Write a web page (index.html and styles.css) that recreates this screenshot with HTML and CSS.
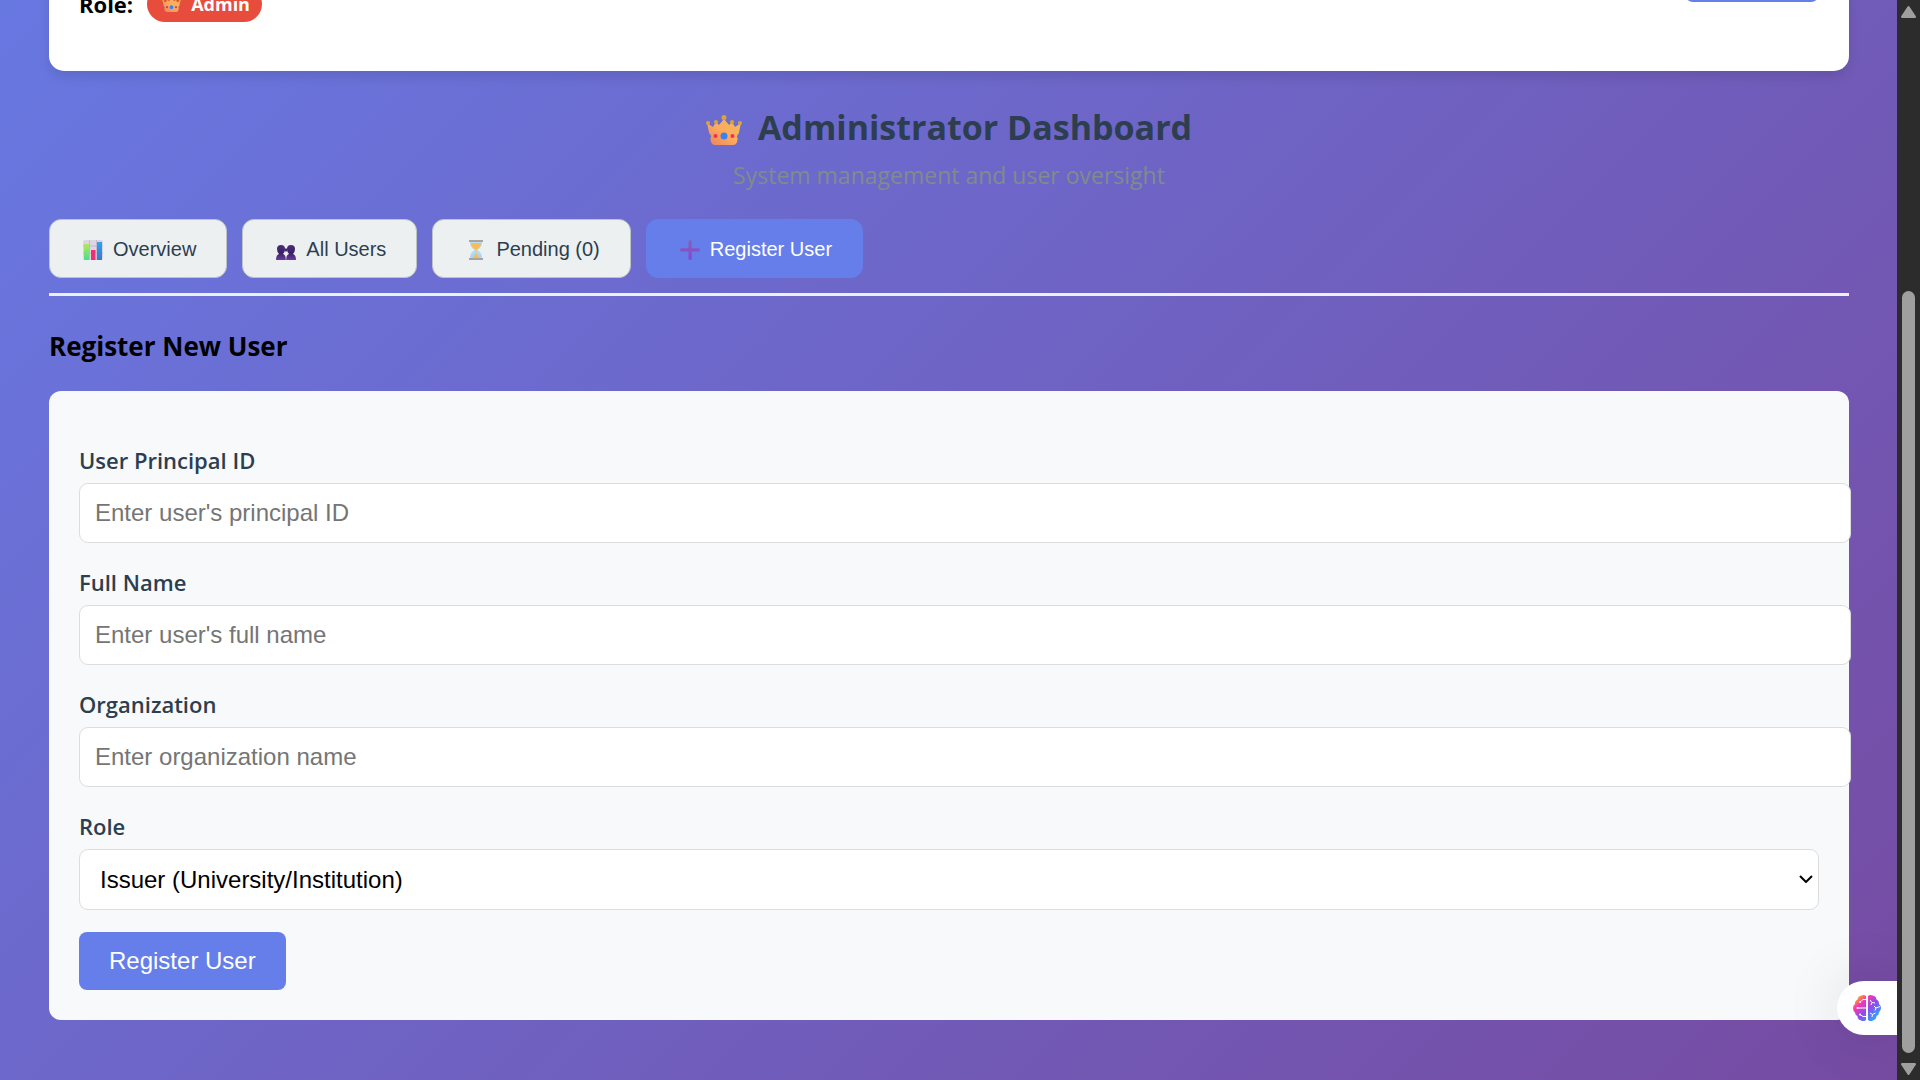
FILE: index.html
```html
<!DOCTYPE html>
<html lang="en">
<head>
<meta charset="utf-8">
<title>Administrator Dashboard</title>
<link rel="stylesheet" href="styles.css">
</head>
<body>
<svg class="defs" aria-hidden="true">
  <defs>
    <linearGradient id="gold" x1="0" y1="1" x2="1" y2="0"><stop offset="0" stop-color="#e9805c"/><stop offset=".5" stop-color="#fdab5c"/><stop offset="1" stop-color="#f3b95c"/></linearGradient>
    <linearGradient id="green" x1="0" y1="0" x2="0" y2="1"><stop offset="0" stop-color="#b4e85c"/><stop offset="1" stop-color="#4ddc8c"/></linearGradient>
    <linearGradient id="blue" x1="0" y1="0" x2="0" y2="1"><stop offset="0" stop-color="#2fa3ef"/><stop offset="1" stop-color="#3b78cf"/></linearGradient>
    <linearGradient id="people" x1="0" y1="0" x2="0" y2="1"><stop offset="0" stop-color="#4b2c78"/><stop offset=".55" stop-color="#3c2166"/><stop offset="1" stop-color="#6a3aa0"/></linearGradient>
    <linearGradient id="plus" x1="0" y1="0" x2="0" y2="1"><stop offset="0" stop-color="#8561b4"/><stop offset="1" stop-color="#8645d6"/></linearGradient>
    <linearGradient id="brain" x1="0" y1="0" x2="1" y2="1"><stop offset=".12" stop-color="#ffa51f"/><stop offset=".3" stop-color="#f536b5"/><stop offset=".55" stop-color="#8a4df0"/><stop offset=".9" stop-color="#1fb4ff"/></linearGradient>
    <symbol id="crown" viewBox="0 0 36 30">
      <path d="M1 8 7 12 10 7 13 10 18 4 23 10 26 7 29 12 35 8 31 27Q30 30 27 30H9Q6 30 5 27Z" fill="url(#gold)"/>
      <g fill="#d9a437"><circle cx="2" cy="8" r="2"/><circle cx="10" cy="7" r="2"/><circle cx="18" cy="2.500" r="2.500"/><circle cx="26" cy="7" r="2"/><circle cx="34" cy="8" r="2"/></g>
      <circle cx="18" cy="21" r="3.500" fill="#3b82f0"/><circle cx="9.500" cy="21" r="2" fill="#f0304e"/><circle cx="26.500" cy="21" r="2" fill="#f0304e"/>
      <path d="M3 19Q5 21 4 23M33 19Q31 21 32 23" stroke="#4b78d8" stroke-width="1.500" fill="none"/>
    </symbol>
  </defs>
</svg>
<div class="window">
  <main class="page">
    <section class="profile">
      <div class="role"><strong>Role:</strong>
        <span class="badge"><svg class="crown-small" aria-hidden="true"><use href="#crown"/></svg>Admin</span>
      </div>
      <button class="profile-action" type="button" aria-label="Account"></button>
    </section>

    <header class="title">
      <h1><svg class="crown-large" aria-hidden="true"><use href="#crown"/></svg>Administrator Dashboard</h1>
      <p>System management and user oversight</p>
    </header>

    <nav class="tabs">
      <button type="button" class="tab">
        <svg class="icon" viewBox="0 0 20 20" aria-hidden="true"><rect width="20" height="20" rx="2" fill="#dcd5e4"/><path d="M0 6H20M0 13H20M6.500 0V20M13.500 0V20" stroke="#b9afc6" stroke-width=".7"/><rect x="1" y="4" width="5" height="16" fill="url(#green)"/><rect x="8" y="10" width="4.500" height="10" fill="#ee2f78"/><rect x="14" y="2" width="5" height="18" fill="url(#blue)"/></svg>
        Overview</button>
      <button type="button" class="tab">
        <svg class="icon" viewBox="0 0 20 20" aria-hidden="true"><g fill="url(#people)"><path d="M1 9Q1 5 5 5T9 9Q9 12 7 14Q10 15 9.800 20H0Q0 15 3 14Q1 12 1 9Z"/><path d="M11 9Q11 5 15 5T19 9Q19 12 17 14Q20 15 20 20H10.200Q10 15 13 14Q11 12 11 9Z"/><path d="M8.500 8.500H11.500V11.500H8.500Z"/></g></svg>
        All Users</button>
      <button type="button" class="tab">
        <svg class="icon" viewBox="0 0 20 20" aria-hidden="true"><path d="M4 1H16V3Q16 7 11.500 10 16 13 16 17V19H4V17Q4 13 8.500 10 4 7 4 3Z" fill="#b9dcf1"/><path d="M5 3H15Q15 7 10.500 9.500V14L15 18H5L9.500 14V9.500Q5 7 5 3Z" fill="#f9bd55"/><path d="M5 15 9 12.500V15L6 18H4.500ZM15 15 11 12.500V15L14 18H15.500Z" fill="#a6d8f5"/><path d="M3 0H17V2H3ZM3 18H17V20H3Z" fill="#a9a3a6"/></svg>
        Pending (0)</button>
      <button type="button" class="tab active">
        <svg class="icon" viewBox="0 0 20 20" aria-hidden="true"><path d="M8.500 1.500Q8.500 0 10 0T11.700 1.500V8.300H18.500Q20 8.300 20 9.900T18.500 11.500H11.700V18.500Q11.700 20 10 20T8.500 18.500V11.500H1.500Q0 11.500 0 9.900T1.500 8.300H8.500Z" fill="url(#plus)"/></svg>
        Register User</button>
    </nav>

    <h2>Register New User</h2>
    <form class="card">
      <div class="field"><label for="principal">User Principal ID</label><input id="principal" type="text" placeholder="Enter user's principal ID"></div>
      <div class="field"><label for="name">Full Name</label><input id="name" type="text" placeholder="Enter user's full name"></div>
      <div class="field"><label for="org">Organization</label><input id="org" type="text" placeholder="Enter organization name"></div>
      <div class="field"><label for="role">Role</label>
        <div class="select-wrap">
          <select id="role"><option>Issuer (University/Institution)</option></select>
          <svg class="chevron" viewBox="0 0 14 8" aria-hidden="true"><path d="M1 1 7 7 13 1" fill="none" stroke="#000" stroke-width="2"/></svg>
        </div>
      </div>
      <button type="button" class="submit">Register User</button>
    </form>
    <button class="assistant" type="button" aria-label="Assistant">
      <svg viewBox="0 0 28 26" aria-hidden="true">
        <path d="M13 1V25Q11 27 8 25.500Q4.500 24.500 4.500 21Q2 20 2 17.500Q0 16 0 13T2 9Q1.500 6 4.500 4.500Q5 1 8.500 .5Q11-.5 13 1ZM15 1Q17-.5 19.500 .5Q23 1 23.500 4.500Q26.500 6 26 9Q28 10.500 28 13T26 17.500Q26 20 23.500 21Q23.500 24.500 20 25.500Q17 27 15 25Z" fill="url(#brain)"/>
        <g fill="none" stroke="#fff"><path d="M13 4.500H10L7 7M13 13H4.500M13 21.500H10L7 19.500M17 5 19 7.500 18 10M19 7.500 22 8M21 11 23 13 27 11.500M23 13 22 15.500M17 18 19.500 19.500 19 22M19.500 19.500 22.500 18"/></g>
        <g fill="#fff"><circle cx="7" cy="7" r="1"/><circle cx="4.500" cy="13" r="1"/><circle cx="7" cy="19.500" r="1"/></g>
      </svg>
    </button>
  </main>
  <div class="scrollbar" aria-hidden="true">
    <svg viewBox="0 0 14 11"><path d="M7 1 13 10H1Z" fill="#9f9f9f" stroke="#9f9f9f" stroke-width="2" stroke-linejoin="round"/></svg>
    <div class="track"><div class="thumb"></div></div>
    <svg viewBox="0 0 14 11"><path d="M7 10 13 1H1Z" fill="#9f9f9f" stroke="#9f9f9f" stroke-width="2" stroke-linejoin="round"/></svg>
  </div>
</div>
</body>
</html>
```
FILE: styles.css
```css
body {
  margin: 0;
  font-family: "Open Sans", "Noto Sans", sans-serif;
  font-size: 22px;
  color: #000;
}

button, input, select {
  font-family: "Liberation Sans", Arial, sans-serif;
}

.defs {
  position: absolute;
  width: 0;
  height: 0;
}

.window {
  display: flex;
  height: 100vh;
  overflow: hidden;
}

.page {
  position: relative;
  flex: 1;
  min-width: 0;
  padding: 0 48px 0 49px;
  overflow: hidden;
  background: linear-gradient(135deg, #667eea 0%, #764ba2 100%) bottom / 100% 1463px;
}

/* The top of the profile card is scrolled out of view */
.profile {
  display: flex;
  justify-content: space-between;
  align-items: flex-start;
  height: 81px;
  margin-top: -60px;
  padding: 20px 30px 30px;
  border-radius: 0 0 15px 15px;
  background: #fff;
  box-shadow: 0 6px 12px rgba(0, 0, 0, 0.1);
}

.role {
  display: flex;
  align-items: center;
  gap: 14px;
  height: 88px;
}

.badge {
  display: flex;
  align-items: center;
  gap: 10px;
  height: 36px;
  padding: 0 12px 0 15px;
  border-radius: 22px;
  background: #e74c3c;
  color: #fff;
  font-size: 18px;
  font-weight: 700;
}

.crown-small {
  width: 19px;
  height: 16px;
}

.profile-action {
  width: 134px;
  height: 42px;
  border: 0;
  border-radius: 8px;
  background: #667eea;
}

.title {
  padding-top: 32px;
  text-align: center;
}

.title h1 {
  display: flex;
  justify-content: center;
  align-items: center;
  gap: 16px;
  margin: 0;
  font-size: 34px;
  line-height: 48px;
  color: #2c3e50;
}

.crown-large {
  width: 36px;
  height: 30px;
  margin-top: 5px;
}

.title p {
  margin: 0;
  font-size: 23px;
  line-height: 48px;
  color: #7f8c8d;
}

.tabs {
  display: flex;
  gap: 15px;
  margin-top: 20px;
  padding-bottom: 15px;
  border-bottom: 3px solid #ecf0f1;
}

.tab {
  display: flex;
  align-items: center;
  gap: 10px;
  height: 59px;
  padding: 2px 30px 0 33px;
  border: 1px solid #bdc3c7;
  border-radius: 12px;
  background: #ecf0f1;
  color: #2c3e50;
  font-size: 20px;
}

.tab.active {
  border-color: #667eea;
  background: #667eea;
  color: #fff;
}

.icon {
  width: 20px;
  height: 20px;
}

h2 {
  margin: 30px 0 25px;
  font-size: 26px;
  line-height: 40px;
}

.card {
  padding: 30px;
  border-radius: 12px;
  background: #f8f9fa;
}

.field {
  padding-top: 24px;
}

.field label {
  display: block;
  margin-bottom: 8px;
  line-height: 30px;
  font-weight: 600;
  color: #2c3e50;
}

.field input {
  display: block;
  box-sizing: content-box;
  width: 100%;
  height: 28px;
  padding: 15px;
  border: 1px solid #ddd;
  border-radius: 9px;
  background: #fff;
  font-size: 24px;
}

.field input::placeholder {
  color: #757575;
}

.select-wrap {
  position: relative;
}

.select-wrap select {
  display: block;
  width: 100%;
  height: 61px;
  padding: 0 40px 0 20px;
  border: 1px solid #ddd;
  border-radius: 9px;
  background: #fff;
  color: #000;
  font-size: 24px;
  appearance: none;
}

.chevron {
  position: absolute;
  top: 26px;
  right: 6px;
  width: 14px;
  height: 8px;
}

.submit {
  display: block;
  height: 58px;
  margin-top: 22px;
  padding: 0 30px;
  border: 0;
  border-radius: 8px;
  background: #667eea;
  color: #fff;
  font-size: 24px;
}

.assistant {
  position: absolute;
  right: 0;
  bottom: 45px;
  display: flex;
  align-items: center;
  width: 60px;
  height: 54px;
  padding: 0 16px;
  border: 0;
  border-radius: 27px 0 0 27px;
  background: #fff;
  box-shadow: 0 0 60px rgba(0, 0, 0, 0.12);
}

.assistant svg {
  width: 28px;
  height: 26px;
}

.scrollbar {
  display: flex;
  flex-direction: column;
  align-items: center;
  box-sizing: border-box;
  width: 23px;
  padding: 6px 0 5px;
  background: #2c2c2c;
}

.scrollbar svg {
  width: 15px;
  height: 12px;
}

.track {
  display: flex;
  flex: 1;
  flex-direction: column;
  justify-content: flex-end;
  padding: 5px 0 10px;
}

.thumb {
  width: 13px;
  height: 74%;
  border-radius: 7px;
  background: #9f9f9f;
}
```
